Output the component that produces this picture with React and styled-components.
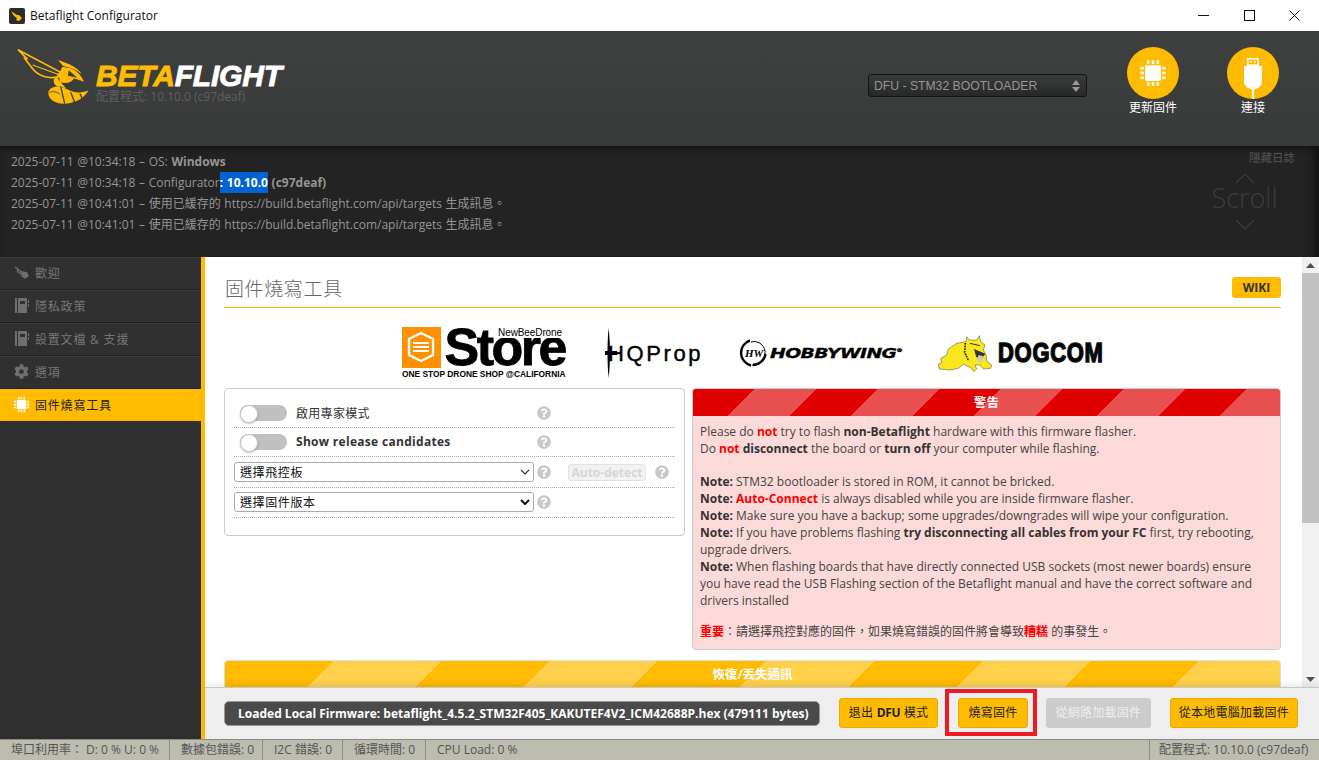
import React from 'react'
import styled, { createGlobalStyle } from 'styled-components'
import { FaCog, FaQuestionCircle } from 'react-icons/fa'

const GlobalStyle = createGlobalStyle`
  html, body { margin: 0; padding: 0; height: 100%; overflow: hidden; background: #fff; }
  body { font-family: "Open Sans", "Noto Sans CJK TC", sans-serif; font-size: 12px; color: #333; }
  * { box-sizing: border-box; }
`

const Chip = ({ size = 16, color = '#fff' }) => (
  <svg width={size} height={size} viewBox="0 0 32 32" fill={color}>
    <rect x="7" y="7" width="18" height="18" rx="1.5" />
    {[9, 14.5, 20].map((p) => (
      <g key={p}>
        <rect x={p} y="1.5" width="3" height="4" />
        <rect x={p} y="26.5" width="3" height="4" />
        <rect x="1.5" y={p} width="4" height="3" />
        <rect x="26.5" y={p} width="4" height="3" />
      </g>
    ))}
  </svg>
)

const BookIcon = () => (
  <svg width="14" height="15" viewBox="0 0 14 15" fill="#6f6f6f">
    <rect x="0" y="0" width="2" height="15" />
    <path d="M3 0h9v15H3z M5 3v3h5V3z" fillRule="evenodd" />
    <rect x="13" y="2" width="1" height="3" />
    <rect x="13" y="6" width="1" height="3" />
  </svg>
)

const BeeSmall = () => (
  <svg width="16" height="13" viewBox="0 0 16 13" fill="none" stroke="#6f6f6f" strokeWidth="1.3">
    <path d="M1 1l8 6M3 4c1 3 4 4 7 4" />
    <path d="M9 6l4 1 1 3-3 2-3-2z" fill="#6f6f6f" />
  </svg>
)

// coordinates follow a 3x crop of the header
const BeeLogo = () => (
  <svg width="76" height="60" viewBox="45 135 228 180" fill="none">
    <path d="M54 146 L186 216 L180 226 C145 236 112 226 92 196 L74 172 L80 172 Z" stroke="#ffbb00" strokeWidth="5" strokeLinejoin="miter" />
    <path d="M98 192 L180 222" stroke="#ffbb00" strokeWidth="3.500" />
    <path d="M174 178 C205 186 232 200 246 220 C226 204 204 198 190 196 Z" fill="#ffbb00" />
    <path d="M186 198 C216 198 240 212 252 242 L222 232 C216 244 200 250 180 244 C180 232 176 226 170 222 C178 216 184 208 186 198 Z" fill="#ffbb00" />
    <path d="M206 208 L232 230 L204 224 Z" fill="#3c3d3d" />
    <path d="M168 226 C158 234 158 250 172 256 L198 262 L184 246 Z" fill="#ffbb00" />
    <path d="M145 274 C148 256 176 250 200 264 C222 276 244 278 266 268 C252 292 228 306 196 308 C166 310 144 296 145 274 Z" fill="#ffbb00" />
    <path d="M182 256 L194 308 M212 274 L224 304 M240 278 L246 292" stroke="#3c3d3d" strokeWidth="4" />
    <path d="M148 274 C160 270 170 272 180 280" stroke="#3c3d3d" strokeWidth="2.500" />
  </svg>
)

const UsbPlug = () => (
  <svg width="18" height="41" viewBox="0 0 18 41" fill="#fff">
    <path d="M3 0h12v8H3z M4.500 1.500v5h9v-5z" fillRule="evenodd" />
    <rect x="6" y="3" width="2" height="1.500" />
    <rect x="10" y="3" width="2" height="1.500" />
    <path d="M0 8h18v16c0 4-4 6.500-8 7.500V41H8v-9.500C4 30.500 0 28 0 24z" />
  </svg>
)

const Chevron = ({ down }) => (
  <svg width="20" height="11" viewBox="0 0 20 11" fill="none" stroke="#3c3c3c" strokeWidth="1.2">
    <path d={down ? 'M1 1l9 9 9-9' : 'M1 10l9-9 9 9'} />
  </svg>
)

const Page = styled.div`
  width: 1319px;
  height: 760px;
  display: flex;
  flex-direction: column;
  overflow: hidden;
`

const TitleBar = styled.div`
  height: 31px;
  flex: none;
  background: #fff;
  display: flex;
  align-items: center;
  padding-left: 9px;
  color: #111;
  font-size: 12px;
  .app-icon {
    width: 16px;
    height: 16px;
    background: #2c2c2c;
    border-radius: 2px;
    margin-right: 5px;
    display: flex;
    align-items: center;
    justify-content: center;
  }
`

const WindowButtons = styled.div`
  margin-left: auto;
  margin-right: 1.5px;
  display: flex;
  button {
    width: 45.5px;
    height: 31px;
    padding: 0;
    border: 0;
    background: transparent;
    display: flex;
    align-items: center;
    justify-content: center;
  }
`

const Header = styled.header`
  height: 115px;
  flex: none;
  background: linear-gradient(#3f4040, #383939);
  display: flex;
  padding-left: 15px;
  .bee { margin-top: 15px; }
`

const Brand = styled.div`
  margin: 28px 0 0 5px;
  .name {
    font-family: "Liberation Sans", sans-serif;
    font-weight: 700;
    font-style: italic;
    font-size: 30px;
    line-height: 34px;
    letter-spacing: -0.2px;
    color: #fff;
    -webkit-text-stroke: 0.9px currentColor;
  }
  .name span { color: #ffbb00; }
  .version {
    font-size: 12px;
    line-height: 14px;
    color: #5f6060;
    margin-top: -3px;
  }
`

const PortSelect = styled.div`
  margin: 43px 16px 0 auto;
  width: 219px;
  height: 23px;
  background: linear-gradient(#3a3b3b, #272828);
  border: 1px solid #141414;
  border-radius: 3px;
  display: flex;
  align-items: center;
  justify-content: space-between;
  padding: 0 6px 0 5px;
  color: #959595;
  font-family: "Liberation Sans", sans-serif;
  font-size: 12.2px;
  .arrows { display: flex; flex-direction: column; gap: 2px; }
`

const HeaderAction = styled.div`
  width: 100px;
  padding-top: 16px;
  display: flex;
  flex-direction: column;
  align-items: center;
  color: #fff;
  font-size: 12px;
  line-height: 16px;
  &:last-child { margin-right: 16px; }
`

const Disc = styled.div`
  width: 52px;
  height: 52px;
  padding-top: ${(p) => p.$top}px;
  border-radius: 50%;
  background: #ffbb00;
  display: flex;
  align-items: flex-start;
  justify-content: center;
  overflow: hidden;
  margin-bottom: 1px;
`

const LogPanel = styled.section`
  position: relative;
  height: 111px;
  flex: none;
  background: #232323;
  box-shadow: inset 0 6px 6px -4px #111, inset -12px 0 10px -8px #111;
  padding: 5px 11px;
  color: #959595;
  font-size: 12px;
  line-height: 21px;
  word-spacing: 0.5px;
  b { font-weight: 700; }
  .sel { background: #0063cf; color: #fff; font-weight: 700; display: inline-block; height: 21px; }
`

const HideLog = styled.div`
  position: absolute;
  top: 3px;
  right: 24px;
  color: #555;
  font-size: 11.5px;
  line-height: 18px;
`

const ScrollHint = styled.div`
  position: absolute;
  top: 27px;
  right: 42px;
  width: 65px;
  display: flex;
  flex-direction: column;
  align-items: center;
  color: #3c3c3c;
  font-size: 27px;
  font-weight: 300;
  span { line-height: 28px; margin-bottom: 7px; }
`

const Main = styled.div`
  flex: 1;
  min-height: 0;
  display: flex;
`

const Sidebar = styled.nav`
  width: 205px;
  flex: none;
  background: #2e2e2e;
  border-right: 4px solid #ffbb00;
`

const NavItem = styled.div`
  height: ${(p) => (p.$active ? 32 : 33)}px;
  display: flex;
  align-items: center;
  padding-bottom: ${(p) => (p.$active ? 1 : 2)}px;
  color: ${(p) => (p.$active ? '#222' : '#777')};
  background: ${(p) => (p.$active ? '#ffbb00' : '#303030')};
  border-bottom: 1px solid ${(p) => (p.$active ? '#ffbb00' : '#222')};
  border-top: 1px solid ${(p) => (p.$active ? '#ffbb00' : '#3a3a3a')};
  font-size: 12px;
  letter-spacing: 0.8px;
  .icon {
    width: 35px;
    flex: none;
    display: flex;
    justify-content: center;
    padding-left: 13px;
    padding-right: 5px;
  }
`

const Workspace = styled.div`
  flex: 1;
  min-width: 0;
  display: flex;
  flex-direction: column;
  background: #fff;
`

const ScrollArea = styled.div`
  flex: 1;
  min-height: 0;
  display: flex;
  overflow: hidden;
`

const Content = styled.div`
  flex: 1;
  min-width: 0;
  padding: 17px 21px 0 19px;
  height: 430px;
  overflow: hidden;
`

const TitleRow = styled.div`
  height: 34px;
  border-bottom: 1px solid #ffbb00;
  display: flex;
  justify-content: space-between;
  color: #666;
  h1 { margin: 0 0 0 1px; font-size: 19px; font-weight: 300; line-height: 30px; letter-spacing: 0.6px; }
`

const WikiBadge = styled.div`
  width: 49px;
  height: 21px;
  margin-top: 3px;
  background: #ffbb00;
  border-radius: 3px;
  color: #333;
  font-weight: 700;
  font-size: 12px;
  line-height: 21px;
  text-align: center;
`

const Sponsors = styled.div`
  height: 80px;
  display: flex;
  align-items: center;
  padding: 10px 0 0 178px;
  color: #000;
`

const StoreLogo = styled.div`
  width: 163px;
  margin-right: 40px;
  position: relative;
  .top { display: flex; height: 41px; }
  .badge {
    width: 41px;
    height: 41px;
    background: #ff9000;
    display: flex;
    align-items: center;
    justify-content: center;
    margin-right: 4px;
  }
  .word {
    font-family: "Liberation Sans", sans-serif;
    font-weight: 700;
    font-size: 52px;
    line-height: 41px;
    letter-spacing: -2.5px;
    -webkit-text-stroke: 0.8px #000;
  }
  .bee {
    position: absolute;
    top: 0;
    right: 3px;
    font-family: "Liberation Sans", sans-serif;
    font-size: 10px;
    line-height: 11px;
    letter-spacing: -0.1px;
    background: #fff;
    padding-left: 1px;
  }
  .tag {
    font-family: "Liberation Sans", sans-serif;
    font-weight: 700;
    font-size: 8.4px;
    line-height: 12px;
    white-space: nowrap;
  }
`

const PropLogo = styled.div`
  width: 97px;
  height: 50px;
  margin-right: 37px;
  display: flex;
  align-items: center;
  svg { flex: none; margin-right: -9px; position: relative; z-index: 1; }
  span {
    font-family: "Liberation Sans", sans-serif;
    font-size: 22px;
    letter-spacing: 2.6px;
    margin-top: 2px;
    -webkit-text-stroke: 0.4px #000;
  }
`

const WingLogo = styled.div`
  width: 165px;
  display: flex;
  align-items: center;
  margin-right: 34px;
  svg { flex: none; }
  svg text { font-family: "Liberation Serif", serif; font-style: italic; font-weight: 700; font-size: 11px; }
  span {
    display: inline-block;
    font-family: "DejaVu Sans", sans-serif;
    font-weight: 700;
    font-style: italic;
    font-size: 14.5px;
    letter-spacing: -0.5px;
    margin-left: 3px;
    white-space: nowrap;
    transform: scaleX(1.3);
    transform-origin: left center;
    -webkit-text-stroke: 0.3px #000;
  }
  sup { font-size: 5px; }
`

const DogLogo = styled.div`
  display: flex;
  align-items: center;
  span {
    display: inline-block;
    font-family: "Liberation Sans", sans-serif;
    font-weight: 700;
    font-size: 22px;
    letter-spacing: 0.7px;
    margin-left: 5px;
    transform: scaleY(1.25);
    -webkit-text-stroke: 1.2px #111;
  }
`

const Panels = styled.div`
  display: flex;
  gap: 7px;
  align-items: flex-start;
`

const OptionsBox = styled.div`
  width: 461px;
  height: 148px;
  flex: none;
  border: 1px solid #ccc;
  border-radius: 4px;
  padding: 10px 9px 0 9px;
`

const OptionRow = styled.div`
  height: ${(p) => p.$h}px;
  padding-bottom: ${(p) => p.$pb ?? 0}px;
  border-bottom: 1px dotted #aaa;
  display: flex;
  align-items: center;
  position: relative;
`

const Switch = styled.span`
  width: 47px;
  height: 16px;
  margin: 0 9px 0 6px;
  border-radius: 8px;
  background: #c0c0c0;
  position: relative;
  flex: none;
  &::before {
    content: '';
    position: absolute;
    left: 0;
    top: 0;
    width: 16px;
    height: 16px;
    border-radius: 50%;
    background: #fff;
    border: 1px solid #c8c8c8;
    box-shadow: 0 1px 2px rgba(0, 0, 0, 0.25);
  }
`

const OptionLabel = styled.span`
  width: 241px;
  color: #333;
  font-weight: ${(p) => (p.$bold ? 700 : 400)};
  font-size: 12px;
  letter-spacing: 0.3px;
  margin-top: -1px;
`

const BoardSelect = styled.div`
  width: 300px;
  height: 20px;
  border: 1px solid #aaa;
  border-radius: 3px;
  background: #fff;
  display: flex;
  align-items: center;
  justify-content: space-between;
  padding: 0 3px 0 5px;
  color: #111;
  font-size: 12px;
  letter-spacing: 0.6px;
`

const Help = styled(FaQuestionCircle)`
  width: 14px;
  height: 14px;
  color: #c8c8c8;
  flex: none;
  margin-left: ${(p) => p.$ml ?? 3}px;
`

const AutoDetect = styled.div`
  width: 78px;
  height: 17px;
  margin-left: 17px;
  border: 1px solid #e2e2e2;
  border-radius: 3px;
  background: #f2f2f2;
  color: #d6d6d6;
  font-weight: 700;
  font-size: 12px;
  line-height: 15px;
  text-align: center;
`

const stripes = (a, b, period) =>
  `repeating-linear-gradient(135deg, ${a} 0, ${a} ${period / 2}px, ${b} ${period / 2}px, ${b} ${period}px)`

const WarningBox = styled.div`
  flex: 1;
  min-width: 0;
  height: 262px;
  border: 1px solid #ccc;
  border-radius: 4px;
  background: #fddada;
  overflow: hidden;
  color: #444;
  font-size: 12px;
  line-height: 17px;
  b { color: #333; }
  em { font-style: normal; font-weight: 700; color: #f00; }
  .body { padding: 7px 22px 0 7px; }
  .gap { height: 16px; }
  .gap.short { height: 14px; }
`

const BoxHead = styled.div`
  height: 27px;
  color: #fff;
  font-weight: 700;
  text-align: center;
  font-size: 12.5px;
  line-height: 27px;
  background: ${(p) => p.$bg};
`

const NoteBox = styled.div`
  margin-top: 10px;
  border: 1px solid #ddd;
  border-bottom: 0;
  border-radius: 4px 4px 0 0;
  overflow: hidden;
  height: 40px;
`

const ScrollBar = styled.div`
  width: 17px;
  flex: none;
  background: #f1f1f1;
  display: flex;
  flex-direction: column;
  align-items: center;
  .arrow { height: 16px; display: flex; align-items: center; justify-content: center; }
  .thumb { width: 100%; height: 250px; background: #c1c1c1; }
  .arrow:last-child { margin-top: auto; }
`

const Footer = styled.div`
  position: relative;
  height: 52px;
  flex: none;
  background: #eee;
  border-top: 1px solid #c8c8c8;
  box-shadow: 0 -3px 6px rgba(0, 0, 0, 0.08);
  display: flex;
  align-items: center;
  padding: 0 21px 1px 19px;
`

const FirmwarePill = styled.div`
  width: 597px;
  height: 25px;
  background: #4a4a4a;
  border: 1px solid #999;
  border-radius: 5px;
  color: #fff;
  font-weight: 700;
  font-size: 12px;
  line-height: 23px;
  padding-left: 13px;
  white-space: nowrap;
`

const ActionButton = styled.div`
  position: relative;
  width: ${(p) => p.$w}px;
  margin-left: ${(p) => p.$ml}px;
  height: 30px;
  flex: none;
  border-radius: 3px;
  background: ${(p) => (p.$off ? '#ccc' : '#ffbb00')};
  border: 1px solid ${(p) => (p.$off ? '#ccc' : '#e8ab00')};
  color: ${(p) => (p.$off ? '#eee' : '#222')};
  font-size: 12px;
  line-height: 28px;
  letter-spacing: 0.25px;
  text-align: center;
  white-space: nowrap;
  b { font-weight: 700; letter-spacing: -0.3px; }
  ${(p) =>
    p.$marked &&
    `&::after {
      content: '';
      position: absolute;
      left: -14px;
      right: -10px;
      top: -10px;
      bottom: -9px;
      border: 4px solid #ed1c24;
    }`}
`

const StatusBar = styled.footer`
  height: 21px;
  flex: none;
  background: #bcbcb0;
  border-top: 1px solid #8d8d86;
  display: flex;
  color: #555;
  font-size: 12px;
  line-height: 19px;
`

const StatusCell = styled.div`
  width: ${(p) => p.$w}px;
  padding-left: ${(p) => p.$pl ?? 11}px;
  border-right: ${(p) => (p.$open ? 0 : '1px solid #8f8f88')};
  white-space: nowrap;
  &:last-child {
    margin-left: auto;
    border-right: 0;
    border-left: 1px solid #8f8f88;
    padding-left: 9px;
  }
`

const navItems = [
  { label: '歡迎', icon: <BeeSmall /> },
  { label: '隱私政策', icon: <BookIcon /> },
  { label: '設置文檔 & 支援', icon: <BookIcon /> },
  { label: '選項', icon: <FaCog size={15} color="#6f6f6f" /> },
  { label: '固件燒寫工具', icon: <Chip size={17} />, active: true },
]

const App = () => {
  return (
    <Page lang="zh-TW">
      <GlobalStyle />
      <TitleBar>
        <div className="app-icon">
          <svg width="12" height="10" viewBox="0 0 12 10" fill="#ffbb00">
            <path d="M0 0l6 4 2 0 3 3-3 3-3-1 1-2-3-2z" />
          </svg>
        </div>
        Betaflight Configurator
        <WindowButtons>
          <button type="button">
            <svg width="11" height="11" stroke="#111" fill="none"><path d="M0 5.5h11" /></svg>
          </button>
          <button type="button">
            <svg width="11" height="11" stroke="#111" fill="none"><rect x=".5" y=".5" width="10" height="10" /></svg>
          </button>
          <button type="button">
            <svg width="11" height="11" stroke="#111" fill="none"><path d="M.5.5l10 10M10.5.5l-10 10" /></svg>
          </button>
        </WindowButtons>
      </TitleBar>

      <Header>
        <div className="bee"><BeeLogo /></div>
        <Brand>
          <div className="name"><span>BETA</span>FLIGHT</div>
          <div className="version">配置程式: 10.10.0 (c97deaf)</div>
        </Brand>
        <PortSelect>
          DFU - STM32 BOOTLOADER
          <div className="arrows">
            <svg width="8" height="5" fill="#999"><path d="M4 0l4 5H0z" /></svg>
            <svg width="8" height="5" fill="#999"><path d="M0 0h8L4 5z" /></svg>
          </div>
        </PortSelect>
        <HeaderAction>
          <Disc $top={12}><Chip size={28} /></Disc>
          更新固件
        </HeaderAction>
        <HeaderAction>
          <Disc $top={11}><UsbPlug /></Disc>
          連接
        </HeaderAction>
      </Header>

      <LogPanel>
        <div>2025-07-11 @10:34:18 – OS: <b>Windows</b></div>
        <div>2025-07-11 @10:34:18 – Configurator<span className="sel">: 10.10.0</span> <b>(c97deaf)</b></div>
        <div>2025-07-11 @10:41:01 – 使用已緩存的 https://build.betaflight.com/api/targets 生成訊息。</div>
        <div>2025-07-11 @10:41:01 – 使用已緩存的 https://build.betaflight.com/api/targets 生成訊息。</div>
        <HideLog>隱藏日誌</HideLog>
        <ScrollHint>
          <Chevron />
          <span>Scroll</span>
          <Chevron down />
        </ScrollHint>
      </LogPanel>

      <Main>
        <Sidebar>
          {navItems.map((item) => (
            <NavItem key={item.label} $active={item.active}>
              <span className="icon">{item.icon}</span>
              {item.label}
            </NavItem>
          ))}
        </Sidebar>

        <Workspace>
          <ScrollArea>
            <Content>
              <TitleRow>
                <h1>固件燒寫工具</h1>
                <WikiBadge>WIKI</WikiBadge>
              </TitleRow>

              <Sponsors>
                <StoreLogo>
                  <div className="top">
                    <div className="badge">
                      <svg width="28" height="32" viewBox="0 0 28 32" fill="none" stroke="#fff">
                        <path d="M14 2l12 6v16l-12 6-12-6V8z" strokeWidth="2.4" />
                        <path d="M6 12h16M6 16h16M6 20h16" strokeWidth="2.2" />
                      </svg>
                    </div>
                    <div className="word">Store</div>
                  </div>
                  <div className="bee">NewBeeDrone</div>
                  <div className="tag">ONE STOP DRONE SHOP @CALIFORNIA</div>
                </StoreLogo>
                <PropLogo>
                  <svg width="12" height="50" viewBox="0 0 12 50" fill="#000">
                    <path d="M3.500 0c1 8 1.500 16 1.500 25s-.5 17-1.500 25c-.6-8-1-16-1-25s.4-17 1-25z" />
                    <rect x="0" y="23" width="12" height="4" />
                  </svg>
                  <span>HQProp</span>
                </PropLogo>
                <WingLogo>
                  <svg width="28" height="28" viewBox="0 0 28 28" fill="none" stroke="#000">
                    <path d="M11 1.500a13 13 0 0 0 1 25" strokeWidth="2.4" />
                    <path d="M12 3a11 11 0 0 1 14 12" strokeWidth="1" />
                    <path d="M26.500 15a13 13 0 0 1-13 11" strokeWidth="2.4" />
                    <text x="6" y="18" fill="#000" stroke="none">HW</text>
                  </svg>
                  <span>HOBBYWING<sup>®</sup></span>
                </WingLogo>
                <DogLogo>
                  <svg width="55" height="37" viewBox="24 180 165 111">
                    <path d="M110 185 L118 195 L140 195 L148 182 L152 200 L165 210 L160 225 L168 240 L170 258 L185 270 L182 280 L160 282 L150 270 L135 270 L140 282 L132 290 L122 278 L100 268 L85 280 L60 285 L28 282 L25 268 L35 262 L32 250 L50 240 L55 222 L80 205 L108 200 Z" fill="#f8e71c" stroke="#444" strokeWidth="1.5" />
                    <path d="M106 204 L104 232 L116 258" fill="none" stroke="#222" strokeWidth="5" strokeDasharray="5 3" />
                    <path d="M132 222 L166 236 L150 258 L138 244 Z" fill="#333" />
                    <path d="M146 240 L160 244 L152 264 L140 254 Z" fill="#c8c8c8" />
                    <path d="M120 205 L150 212" stroke="#333" strokeWidth="3" />
                  </svg>
                  <span>DOGCOM</span>
                </DogLogo>
              </Sponsors>

              <Panels>
                <OptionsBox>
                  <OptionRow $h={29}>
                    <Switch />
                    <OptionLabel>啟用專家模式</OptionLabel>
                    <Help $ml={0} />
                  </OptionRow>
                  <OptionRow $h={29}>
                    <Switch />
                    <OptionLabel $bold>Show release candidates</OptionLabel>
                    <Help $ml={0} />
                  </OptionRow>
                  <OptionRow $h={31}>
                    <BoardSelect>
                      選擇飛控板
                      <svg width="10" height="6" fill="none" stroke="#333" strokeWidth="1.200"><path d="M1 1l4 4 4-4" /></svg>
                    </BoardSelect>
                    <Help />
                    <AutoDetect>Auto-detect</AutoDetect>
                    <Help $ml={9} />
                  </OptionRow>
                  <OptionRow $h={30} $pb={1}>
                    <BoardSelect>
                      選擇固件版本
                      <svg width="10" height="6" fill="none" stroke="#111" strokeWidth="2"><path d="M1 1l4 4 4-4" /></svg>
                    </BoardSelect>
                    <Help />
                  </OptionRow>
                </OptionsBox>

                <WarningBox>
                  <BoxHead $bg={stripes('#e00000', '#e84f4f', 87)}>警告</BoxHead>
                  <div className="body">
                    Please do <em>not</em> try to flash <b>non-Betaflight</b> hardware with this firmware flasher.<br />
                    Do <em>not</em> <b>disconnect</b> the board or <b>turn off</b> your computer while flashing.<br />
                    <div className="gap" />
                    <b>Note:</b> STM32 bootloader is stored in ROM, it cannot be bricked.<br />
                    <b>Note:</b> <em>Auto-Connect</em> is always disabled while you are inside firmware flasher.<br />
                    <b>Note:</b> Make sure you have a backup; some upgrades/downgrades will wipe your configuration.<br />
                    <b>Note:</b> If you have problems flashing <b>try disconnecting all cables from your FC</b> first, try rebooting, upgrade drivers.<br />
                    <b>Note:</b> When flashing boards that have directly connected USB sockets (most newer boards) ensure you have read the USB Flashing section of the Betaflight manual and have the correct software and drivers installed<br />
                    <div className="gap short" />
                    <em>重要</em>：請選擇飛控對應的固件，如果燒寫錯誤的固件將會導致<em>糟糕</em> 的事發生。
                  </div>
                </WarningBox>
              </Panels>

              <NoteBox>
                <BoxHead $bg={stripes('#ffbb00', '#ffd04c', 153)}>恢復/丟失通訊</BoxHead>
              </NoteBox>
            </Content>
            <ScrollBar>
              <div className="arrow"><svg width="9" height="5" fill="#505050"><path d="M4.500 0L9 5H0z" /></svg></div>
              <div className="thumb" />
              <div className="arrow"><svg width="9" height="5" fill="#505050"><path d="M0 0h9L4.500 5z" /></svg></div>
            </ScrollBar>
          </ScrollArea>

          <Footer>
            <FirmwarePill>Loaded Local Firmware: betaflight_4.5.2_STM32F405_KAKUTEF4V2_ICM42688P.hex (479111 bytes)</FirmwarePill>
            <ActionButton $w={99} $ml={19}>退出 <b>DFU</b> 模式</ActionButton>
            <ActionButton $w={70} $ml={20} $marked>燒寫固件</ActionButton>
            <ActionButton $w={105} $ml={18} $off>從網路加載固件</ActionButton>
            <ActionButton $w={128} $ml={19}>從本地電腦加載固件</ActionButton>
          </Footer>
        </Workspace>
      </Main>

      <StatusBar>
        <StatusCell $w={170}>埠口利用率： D: 0 % U: 0 %</StatusCell>
        <StatusCell $w={93}>數據包錯誤: 0</StatusCell>
        <StatusCell $w={80}>I2C 錯誤: 0</StatusCell>
        <StatusCell $w={83}>循環時間: 0</StatusCell>
        <StatusCell $w={110} $open>CPU Load: 0 %</StatusCell>
        <StatusCell $w={170}>配置程式: 10.10.0 (c97deaf)</StatusCell>
      </StatusBar>
    </Page>
  )
}

export default App
